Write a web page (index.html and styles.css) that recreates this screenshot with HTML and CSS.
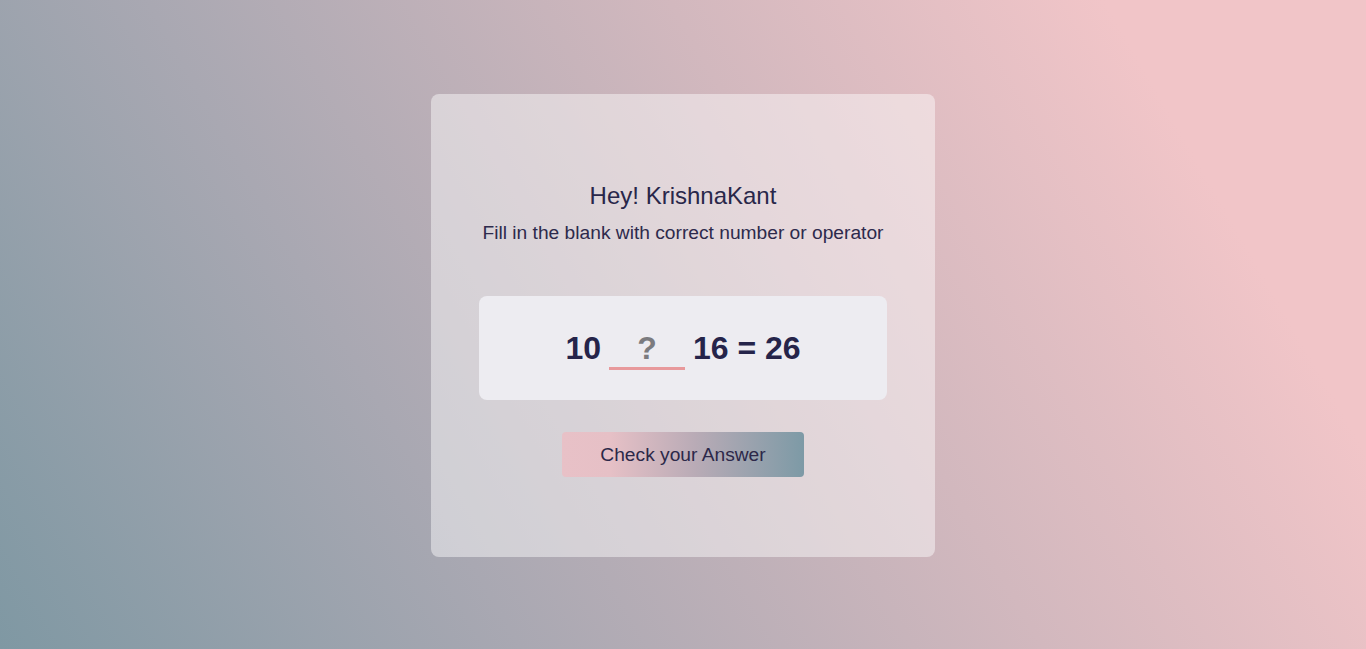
FILE: index.html
```html
<!DOCTYPE html>
<html lang="en">
<head>
<meta charset="utf-8">
<title>Math Quiz</title>
<link rel="stylesheet" href="styles.css">
</head>
<body>
<main class="card">
  <h1 class="title">Hey! KrishnaKant</h1>
  <p class="subtitle">Fill in the blank with correct number or operator</p>
  <div class="puzzle">
    <span class="num">10</span>
    <input class="blank" type="text" placeholder="?">
    <span class="num">16 = 26</span>
  </div>
  <button class="check" type="button">Check your Answer</button>
</main>
</body>
</html>
```

FILE: styles.css
```css
html, body {
  margin: 0;
  height: 100%;
}
body {
  font-family: "Liberation Sans", Arial, sans-serif;
  background: linear-gradient(60deg, #7f98a3 0%, #a9a8b2 30%, #d2b8be 60%, #f1c5c8 85%, #f1c5c8 100%);
  display: flex;
  align-items: center;
  justify-content: center;
  color: #27254a;
}
.card {
  box-sizing: border-box;
  width: 504px;
  height: 463px;
  margin-top: 2px;
  padding: 88px 48px 0;
  border-radius: 8px;
  background: rgba(255, 255, 255, 0.45);
  display: flex;
  flex-direction: column;
  align-items: center;
}
.title {
  margin: 0;
  font-size: 24px;
  font-weight: normal;
  line-height: 28px;
  color: #29274a;
}
.subtitle {
  margin: 12px 0 0;
  font-size: 19.2px;
  line-height: 22px;
  color: #2d2a4c;
}
.puzzle {
  box-sizing: border-box;
  width: 408px;
  height: 104px;
  margin-top: 52px;
  border-radius: 8px;
  background: #edecf1;
  display: flex;
  align-items: center;
  justify-content: center;
  gap: 8px;
  font-size: 32px;
  font-weight: bold;
  color: #25244a;
}
.blank {
  box-sizing: border-box;
  width: 76px;
  height: 40px;
  margin-top: 3px;
  padding: 0;
  border: none;
  border-bottom: 3px solid #e8999c;
  background: transparent;
  font-family: inherit;
  font-size: 32px;
  font-weight: bold;
  text-align: center;
  color: #25244a;
  outline: none;
}
.blank::placeholder {
  color: #7b7b7f;
}
.check {
  width: 242px;
  height: 45px;
  margin-top: 32px;
  border: none;
  border-radius: 4px;
  background: linear-gradient(to right, #e8c1c7 0%, #e6c0c6 20%, #b9abb6 55%, #7d9aa6 100%);
  font-family: inherit;
  font-size: 19.2px;
  color: #2c2849;
}
```
